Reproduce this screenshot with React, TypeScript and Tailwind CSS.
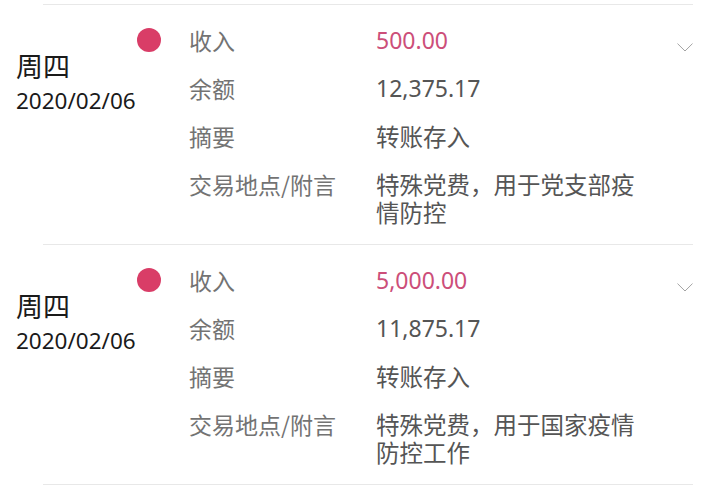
const rows = [
  {
    weekday: '周四',
    date: '2020/02/06',
    amount: '500.00',
    balance: '12,375.17',
    summary: '转账存入',
    note: '特殊党费，用于党支部疫情防控',
  },
  {
    weekday: '周四',
    date: '2020/02/06',
    amount: '5,000.00',
    balance: '11,875.17',
    summary: '转账存入',
    note: '特殊党费，用于国家疫情防控工作',
  },
];

const latin = "font-['Noto_Sans',sans-serif]";

function Divider() {
  return <div className="ml-[43px] mr-[26px] h-px bg-[#e8e8e8]" />;
}

function Chevron() {
  return (
    <svg width="16" height="9" viewBox="0 0 16 9" fill="none" className="block">
      <path d="M0.5 0.6 L8 8 L15.5 0.6" stroke="#a3a3a3" strokeWidth="1" />
    </svg>
  );
}

function Row({ row }: { row: (typeof rows)[number] }) {
  return (
    <div className="flex h-[239px] items-start pl-4 pr-[26px]">
      <div className="w-[121px] shrink-0 pt-[43px] text-[#1a1a1a]">
        <div className="h-9 text-[27px] leading-[36px]">{row.weekday}</div>
        <div className={`mt-[3px] h-7 text-[22.5px] leading-[28px] ${latin}`}>{row.date}</div>
      </div>
      <div className="w-6 shrink-0 pt-[23px]">
        <div className="h-6 w-6 rounded-full bg-[#d93d67]" />
      </div>
      <div className="ml-7 grid grid-cols-[187px_272px] content-start gap-y-5 pt-[21px] text-[23px] leading-[28px]">
        <div className="h-7 text-[#737373]">收入</div>
        <div className={`h-7 text-[#cc4e79] ${latin}`}>{row.amount}</div>
        <div className="h-7 text-[#737373]">余额</div>
        <div className={`h-7 text-[#555] ${latin}`}>{row.balance}</div>
        <div className="h-7 text-[#737373]">摘要</div>
        <div className="text-[23.5px] text-[#555]">{row.summary}</div>
        <div className="text-[#737373]">交易地点/附言</div>
        <div className="text-[23.5px] text-[#555]">{row.note}</div>
      </div>
      <div className="ml-auto pt-[38px]">
        <Chevron />
      </div>
    </div>
  );
}

export default function App() {
  return (
    <div
      className="h-[486px] w-[719px] overflow-hidden bg-white pt-1"
      style={{ fontFamily: '"Noto Sans CJK SC", sans-serif' }}
    >
      <Divider />
      <Row row={rows[0]} />
      <Divider />
      <Row row={rows[1]} />
      <Divider />
    </div>
  );
}
